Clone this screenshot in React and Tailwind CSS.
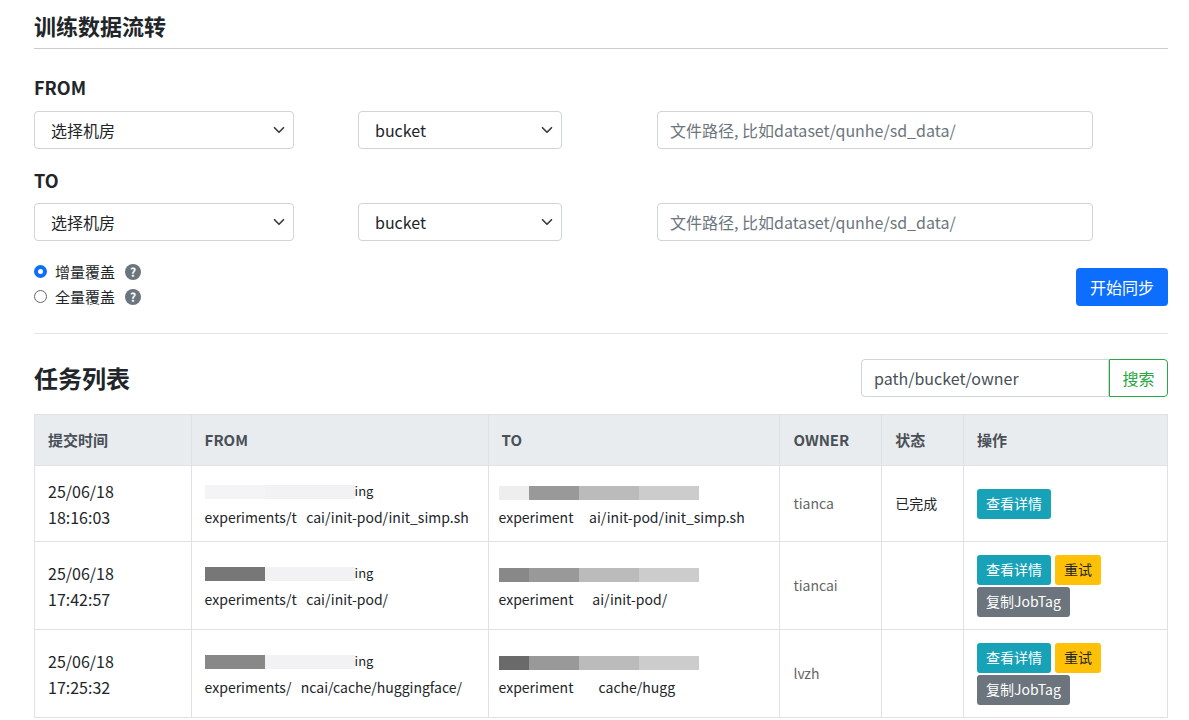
const F = { fontFamily: '"Noto Sans CJK SC", "Liberation Sans", sans-serif' };

function Sel({ w, text }) {
  return (
    <div className={`${w} h-[38px] border border-[#ced4da] rounded-[4px] flex items-center justify-between pl-4 pr-2 text-[16px] text-[#212529] bg-white`}>
      <span>{text}</span>
      <svg width="12" height="12" viewBox="0 0 16 16"><path d="M2 5l6 6 6-6" fill="none" stroke="#343a40" strokeWidth="2.2" strokeLinecap="round" strokeLinejoin="round" /></svg>
    </div>
  );
}
function Inp() {
  return <div className="w-[436px] h-[38px] border border-[#ced4da] rounded-[4px] flex items-center px-3 text-[16px] text-[#6c757d]">文件路径, 比如dataset/qunhe/sd_data/</div>;
}
function Q() {
  return <span className="ml-[10px] w-[16px] h-[16px] rounded-full bg-[#6c757d] text-white text-[12px] font-bold inline-flex items-center justify-center leading-none">?</span>;
}
function Blk({ c, w }) {
  return <span className="inline-block h-[14px] align-middle" style={{ background: c, width: w }} />;
}
function Btn({ c, t, dark }) {
  return <span className={`${c} ${dark ? 'text-[#212529]' : 'text-white'} text-[14px] h-[30px] px-[9px] rounded-[3px] inline-flex items-center`}>{t}</span>;
}

const rows = [
  { d: '25/06/18', t: '18:16:03', f: 'experiments/t   cai/init-pod/init_simp.sh', to: 'experiment     ai/init-pod/init_simp.sh', o: 'tianca', s: '已完成', full: false, blk: ['#f4f4f6', '#eee'] },
  { d: '25/06/18', t: '17:42:57', f: 'experiments/t   cai/init-pod/', to: 'experiment      ai/init-pod/', o: 'tiancai', s: '', full: true, blk: ['#777', '#888'] },
  { d: '25/06/18', t: '17:25:32', f: 'experiments/   ncai/cache/huggingface/', to: 'experiment        cache/hugg', o: 'lvzh', s: '', full: true, blk: ['#888', '#6a6a6a'] },
];

export default function App() {
  return (
    <div className="w-[1189px] h-[720px] overflow-hidden bg-white px-[34px] pt-[8px] text-[#212529]" style={F}>
      <h2 className="text-[22px] font-bold h-[40px] leading-[34px]">训练数据流转</h2>
      <div className="border-t border-[#ccc] w-[1134px]" />
      <div className="w-[1134px]">
        <div className="text-[18px] font-bold mt-[25px] mb-[10px]">FROM</div>
        <div className="flex">
          <Sel w="w-[260px]" text="选择机房" />
          <div className="ml-[64px]"><Sel w="w-[204px]" text="bucket" /></div>
          <div className="ml-[95px]"><Inp /></div>
        </div>
        <div className="text-[18px] font-bold mt-[18px] mb-[9px]">TO</div>
        <div className="flex">
          <Sel w="w-[260px]" text="选择机房" />
          <div className="ml-[64px]"><Sel w="w-[204px]" text="bucket" /></div>
          <div className="ml-[95px]"><Inp /></div>
        </div>
        <div className="flex justify-between items-start mt-[18px]">
          <div className="text-[15px] leading-[25px]">
            <div className="flex items-center"><span className="w-[13px] h-[13px] rounded-full border-[4px] border-[#0d6efd] mr-2" />增量覆盖<Q /></div>
            <div className="flex items-center"><span className="w-[13px] h-[13px] rounded-full border border-[#666] mr-2" />全量覆盖<Q /></div>
          </div>
          <button className="mt-[9px] w-[92px] h-[38px] bg-[#0d6efd] text-white text-[16px] rounded-[4px]">开始同步</button>
        </div>
        <div className="border-t border-[#e5e5e5] mt-[24px]" />
        <div className="flex justify-between items-center mt-[25px] mb-[17px]">
          <div className="text-[24px] font-bold">任务列表</div>
          <div className="flex">
            <div className="w-[248px] h-[38px] border border-[#ced4da] rounded-l-[4px] flex items-center px-3 text-[16px] text-[#495057]">path/bucket/owner</div>
            <div className="w-[59px] h-[38px] border border-[#28a745] rounded-r-[4px] flex items-center justify-center text-[16px] text-[#28a745]">搜索</div>
          </div>
        </div>
        <table className="w-[1134px] border-collapse text-[14px]">
          <thead>
            <tr className="bg-[#e9ecef] h-[51px] text-[15px] font-bold text-[#495057]">
              {[['提交时间', 157], ['FROM', 297], ['TO', 292], ['OWNER', 102], ['状态', 82], ['操作', 204]].map(([h, w]) => (
                <th key={h} className="border border-[#dee2e6] text-left px-[13px] font-bold" style={{ width: w }}>{h}</th>
              ))}
            </tr>
          </thead>
          <tbody>
            {rows.map((r, i) => (
              <tr key={i} style={{ height: i === 0 ? 76 : 88 }}>
                <td className="border border-[#dee2e6] px-[13px] text-[16px] leading-[26px]"><div>{r.d}</div><div>{r.t}</div></td>
                <td className="border border-[#dee2e6] px-[13px] leading-[26px] whitespace-pre">
                  <div><Blk c={r.blk[0]} w={60} /><Blk c="#f2f2f4" w={90} /><span className="text-[13px]">ing</span></div>
                  <div>{r.f}</div>
                </td>
                <td className="border border-[#dee2e6] px-[10px] leading-[26px] whitespace-pre">
                  <div><Blk c={r.blk[1]} w={30} /><Blk c="#999" w={50} /><Blk c="#bbb" w={60} /><Blk c="#ccc" w={60} /></div>
                  <div>{r.to}</div>
                </td>
                <td className="border border-[#dee2e6] px-[13px] text-[#666]">{r.o}</td>
                <td className="border border-[#dee2e6] px-[13px]">{r.s}</td>
                <td className="border border-[#dee2e6] px-[13px]">
                  <div className="flex flex-wrap gap-x-[4px] gap-y-[2px] w-[160px]">
                    <Btn c="bg-[#17a2b8]" t="查看详情" />
                    {r.full && <Btn c="bg-[#ffc107]" t="重试" dark />}
                    {r.full && <Btn c="bg-[#6c757d]" t="复制JobTag" />}
                  </div>
                </td>
              </tr>
            ))}
          </tbody>
        </table>
      </div>
    </div>
  );
}
